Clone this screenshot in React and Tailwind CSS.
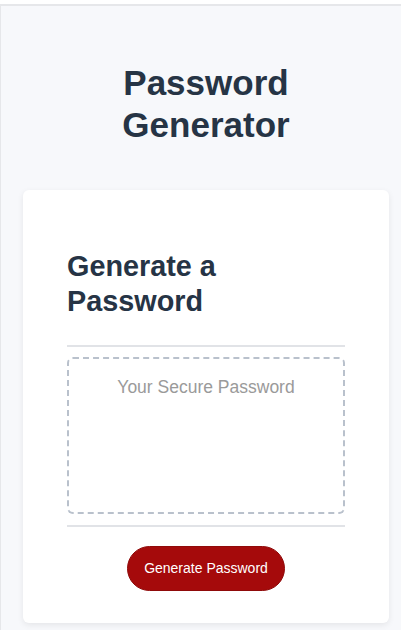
import React, { useState } from 'react';

const CHARS = 'ABCDEFGHIJKLMNOPQRSTUVWXYZabcdefghijklmnopqrstuvwxyz0123456789!@#$%^&*';

export default function App() {
  const [password, setPassword] = useState('');

  const generate = () => {
    let out = '';
    for (let i = 0; i < 16; i++) out += CHARS[Math.floor(Math.random() * CHARS.length)];
    setPassword(out);
  };

  return (
    <div className="min-h-[630px] bg-white pt-[4px] font-['Liberation_Sans',Arial,sans-serif]">
      <div className="min-h-[626px] border-t-2 border-l border-[#e6e7ea] bg-[#f7f8fb] pl-[22px] pr-[12px] pb-[6px]">
        {/* titolo */}
        <h1 className="pt-[56px] text-center text-[35px] font-bold leading-[42px] text-[#263445]">
          Password
          <br />
          Generator
        </h1>

        {/* card */}
        <div className="mt-[44px] rounded-[6px] bg-white px-[44px] pt-[59px] pb-[32px] shadow-[0_2px_6px_rgba(0,0,0,0.08)]">
          <h2 className="text-[28.8px] font-bold leading-[34.5px] text-[#263445]">
            Generate a
            <br />
            Password
          </h2>

          <div className="mt-[27px] border-t-2 border-[#e1e3e7] pt-[10px] pb-[11px]">
            <textarea
              readOnly
              value={password}
              placeholder="Your Secure Password"
              className="block h-[157px] w-full resize-none rounded-[6px] border-2 border-dashed border-[#b9c1cc] bg-white px-4 pt-[15px] text-center text-[17.5px] leading-[26px] text-[#263445] placeholder:text-[#9a9a9a] outline-none"
            />
          </div>

          <div className="border-t-2 border-[#e1e3e7] pt-[19px] flex justify-center">
            <button
              onClick={generate}
              className="h-[45px] rounded-full border border-[#8f0a0a] bg-[#a50a0b] px-[16px] text-[14px] text-white"
            >
              Generate Password
            </button>
          </div>
        </div>
      </div>
    </div>
  );
}
